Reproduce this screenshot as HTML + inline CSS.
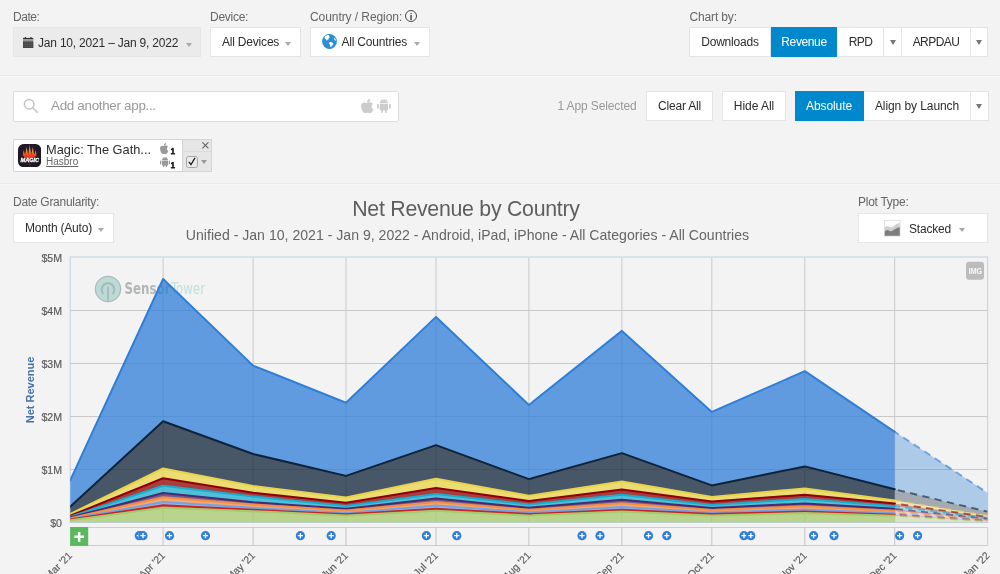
<!DOCTYPE html>
<html lang="en">
<head>
<meta charset="utf-8">
<title>Net Revenue by Country</title>
<style>
*{box-sizing:border-box;margin:0;padding:0}
html,body{width:1000px;height:574px;overflow:hidden;background:#f3f3f3}
#root{position:absolute;left:0;top:0;width:1000px;height:574px;will-change:transform}
body{font-family:"Liberation Sans",Arial,Helvetica,sans-serif;font-size:11.6px;color:#222;position:relative}
.abs{position:absolute}
.lbl{position:absolute;font-size:12px;letter-spacing:-.27px;color:#666;white-space:nowrap;line-height:14px}
.box{position:absolute;background:#fff;border:1px solid #e4e4e4;height:30px;line-height:28px;white-space:nowrap;font-size:12px;letter-spacing:-.2px;color:#2c2c2c}
.box.gray{background:#ebebeb;border-color:#e6e6e6}
.caret{display:inline-block;width:0;height:0;border-left:3.7px solid transparent;border-right:3.7px solid transparent;border-top:4px solid #aaa;vertical-align:middle}
.btn{position:absolute;top:0;height:30px;line-height:28px;text-align:center;background:#fff;border:1px solid #e4e4e4;border-left:none;font-size:12px;letter-spacing:-.2px;color:#2c2c2c;white-space:nowrap}
.btn.first{border-left:1px solid #e4e4e4}
.btn.on{background:#0088cc;border-color:#0088cc;color:#fff}
.tri{display:inline-block;width:0;height:0;border-left:3.6px solid transparent;border-right:3.6px solid transparent;border-top:5.6px solid #777;vertical-align:middle;position:relative;top:-.6px}
.sep{position:absolute;left:0;width:1000px;height:2px;border-top:1px solid #e9e9e9;border-bottom:1px solid #f9f9f9}
svg text.yl{font-size:10.6px;fill:#5c5c5c;stroke:#5c5c5c;stroke-width:.2px;font-family:"Liberation Sans",Arial,sans-serif}
svg text.xl{font-size:10.3px;fill:#5c5c5c;stroke:#5c5c5c;stroke-width:.15px;font-family:"Liberation Sans",Arial,sans-serif}
</style>
</head>
<body>
<div id="root">

<!-- ===== Row 1 : filters ===== -->
<div class="lbl" style="left:13px;top:10px;letter-spacing:-.45px">Date:</div>
<div class="box gray" style="left:13px;top:27.400px;width:188px">
  <svg class="abs" style="left:8.800px;top:8.800px" width="11" height="12" viewBox="0 0 11 12"><path d="M1.800 0h1.200v1.400H1.800zM7.400 0h1.200v1.400H7.400z" fill="#3a3a3a"/><path d="M0 .9h10.300v1.500H0z" fill="#333"/><path d="M0 2.400h10.300v1.900H0z" fill="#9a9a9a"/><path d="M0 4.300h10.300V11H0z" fill="#3d3d3d"/><path d="M0 6h10.300M0 7.700h10.300M0 9.400h10.300M2.100 4.800V11M4.150 4.800V11M6.200 4.800V11M8.250 4.800V11" stroke="#6a6a6a" stroke-width=".45"/></svg>
  <span class="abs" style="left:24px;top:1px">Jan 10, 2021 – Jan 9, 2022</span>
  <span class="caret abs" style="left:171.500px;top:14.500px"></span>
</div>

<div class="lbl" style="left:210px;top:10px">Device:</div>
<div class="box" style="left:210px;top:27.400px;width:91px">
  <span class="abs" style="left:11px;top:0">All Devices</span>
  <span class="caret abs" style="left:74px;top:14px"></span>
</div>

<div class="lbl" style="left:310px;top:10px;letter-spacing:-.07px">Country / Region:<span style="position:absolute;left:95px;top:.3px;width:12px;height:12px;border:1.100px solid #444;border-radius:50%;font-size:9.5px;line-height:11.800px;text-align:center;color:#333;font-weight:bold;letter-spacing:0">i</span></div>
<div class="box" style="left:310px;top:27.400px;width:120px">
  <svg class="abs" style="left:10.700px;top:6.100px" width="15" height="15" viewBox="0 0 15 15"><circle cx="7.500" cy="7.500" r="7.400" fill="#2a8fd6"/><path d="M3.300 2.300c.9-.9 2.300-1.500 3.500-1.300.5.300.3.800-.1 1 .6.100 1.200.500 1.100 1.100-.1.500-.7.500-1 .9-.3.400.2.900-.2 1.300-.4.300-.9 0-1.200.400-.2.300.1.700-.2.900-.5.200-.8-.4-1-.8-.3-.6-.9-.9-1.300-1.400-.5-.6-.2-1.500.4-2.100z" fill="#fff"/><path d="M7.600 8.200c.7-.3 1.600-.1 2.200.3.500.3 1.200.3 1.500.8.300.600-.2 1.200-.6 1.600-.500.500-.7 1.200-1.200 1.700-.3.300-.9.500-1.200.100-.3-.500 0-1.100-.2-1.600-.2-.6-.9-.9-1-1.500-.1-.600.100-1.200.500-1.400z" fill="#fff"/><path d="M12.300 3.700c.800.700 1.500 1.700 1.800 2.800-.4.300-.9.100-1.100-.3-.2-.500-.8-.6-1-1.100-.2-.500-.1-1.100.3-1.400z" fill="#fff"/></svg>
  <span class="abs" style="left:30.500px;top:0">All Countries</span>
  <span class="caret abs" style="left:102.500px;top:14px"></span>
</div>

<div class="lbl" style="left:689.500px;top:10px;letter-spacing:-.14px">Chart by:</div>
<div class="abs" style="left:689px;top:27.400px;height:30px;width:299px">
  <div class="btn first" style="left:0;width:82px">Downloads</div>
  <div class="btn on" style="left:82px;width:66px;letter-spacing:-.38px;padding-left:1px">Revenue</div>
  <div class="btn" style="left:148px;width:47px;letter-spacing:-.6px;padding-left:1px">RPD</div>
  <div class="btn" style="left:195px;width:18px"><span class="tri"></span></div>
  <div class="btn" style="left:213px;width:69px;letter-spacing:-.55px">ARPDAU</div>
  <div class="btn" style="left:282px;width:17px"><span class="tri"></span></div>
</div>

<div class="sep" style="top:75px"></div>

<!-- ===== Row 2 : app search ===== -->
<div class="abs" style="left:13px;top:91px;width:386px;height:30.500px;background:#fff;border:1px solid #ddd;border-radius:2px">
  <svg class="abs" style="left:9.300px;top:6.100px" width="16" height="16" viewBox="0 0 16 16"><circle cx="6.2" cy="6.2" r="4.800" fill="none" stroke="#c2c2c2" stroke-width="1.500"/><path d="M9.700 9.700L14.200 14.200" stroke="#c4c4c4" stroke-width="1.600" stroke-linecap="round"/></svg>
  <span class="abs" style="left:37px;top:0;line-height:28.500px;font-size:13.4px;letter-spacing:-.3px;color:#999">Add another app...</span>
  <svg class="abs" style="left:346.600px;top:6.800px" width="13.300" height="14.500" viewBox="0 0 12 14" preserveAspectRatio="none"><path d="M8.300 0c.1.900-.3 1.700-.8 2.300-.5.600-1.300 1-2.100.900-.1-.8.300-1.700.8-2.200C6.700.4 7.600 0 8.300 0zM10.900 4.800c-.9.600-1.400 1.400-1.400 2.500 0 1.200.7 2.200 1.800 2.600-.3.900-.7 1.700-1.300 2.500-.5.700-1.100 1.400-1.900 1.400-.8 0-1.100-.5-2.100-.5s-1.300.5-2.100.5c-.8 0-1.400-.7-2-1.500C.8 10.800 0 8.600 0 6.900c0-2.300 1.500-3.600 3-3.600.9 0 1.700.6 2.300.6.500 0 1.500-.7 2.600-.7 1.100 0 2.200.5 3 1.600z" fill="#ccc"/></svg>
  <svg class="abs" style="left:363.100px;top:7.200px" width="13.800" height="14" viewBox="0 0 14 15" preserveAspectRatio="none"><path d="M2.800 5h8.400v6.300c0 .4-.3.700-.7.700H9.800v2.100c0 .5-.4.900-.9.900s-.9-.4-.9-.9V12H6v2.100c0 .5-.4.900-.9.900s-.9-.4-.9-.9V12H3.500c-.4 0-.7-.3-.7-.7zM.9 5c.5 0 .9.400.9.900v3.700c0 .5-.4.900-.9.900S0 10.100 0 9.600V5.900C0 5.400.4 5 .9 5zM13.100 5c.5 0 .9.400.9.900v3.700c0 .5-.4.900-.9.900s-.9-.4-.9-.9V5.900c0-.5.400-.9.900-.9zM9.300 1.300l.7-1c.1-.1 0-.2-.1-.3-.1 0-.2 0-.200.100L9 1.100C8.400.9 7.700.8 7 .8s-1.400.1-2 .3L4.300.1C4.300 0 4.200 0 4.100 0 4 .1 3.900.2 4 .3l.7 1C3.600 1.900 2.900 3 2.800 4.300h8.400C11.100 3 10.400 1.900 9.300 1.300zM5.200 3.100c-.2 0-.4-.2-.4-.4s.2-.4.400-.4.400.2.400.4-.2.400-.4.400zm3.600 0c-.2 0-.4-.2-.4-.4s.2-.4.400-.4.400.2.400.4-.2.400-.4.400z" fill="#ccc"/></svg>
</div>

<div class="lbl" style="left:557.500px;top:99px;color:#999;letter-spacing:-.12px">1 App Selected</div>
<div class="abs" style="left:646px;top:91.400px;height:30px">
  <div class="btn first" style="left:0;width:67px">Clear All</div>
  <div class="btn first" style="left:76px;width:64px;letter-spacing:-.03px">Hide All</div>
  <div class="btn on" style="left:149px;width:69px;letter-spacing:-.09px">Absolute</div>
  <div class="btn" style="left:218px;width:107px;letter-spacing:-.08px">Align by Launch</div>
  <div class="btn" style="left:325px;width:17.500px"><span class="tri"></span></div>
</div>

<!-- app chip -->
<div class="abs" style="left:13px;top:139px;width:199px;height:33px;background:#fff;border:1px solid #d5d5d5;border-radius:2px">
  <svg class="abs" style="left:4px;top:3.800px" width="23.200" height="23.200" viewBox="0 0 23 23">
    <defs><linearGradient id="fl" x1="0" y1="0" x2="0" y2="1"><stop offset="0" stop-color="#d9892a"/><stop offset=".35" stop-color="#f0a030"/><stop offset=".7" stop-color="#f2401c"/><stop offset="1" stop-color="#e8301a"/></linearGradient>
    <radialGradient id="ib" cx=".5" cy=".45" r=".7"><stop offset="0" stop-color="#32243a"/><stop offset="1" stop-color="#17121b"/></radialGradient></defs>
    <rect width="23" height="23" rx="5.600" fill="url(#ib)"/>
    <path d="M11.600 .4V22.600" stroke="#9c2a18" stroke-width=".55"/>
    <path d="M4.800 11.200C5 9.500 5.500 7.500 5.700 6.200 6 7.600 6.600 9.400 7.100 10.400 7.700 8 8.300 5 8.500 2.700 8.800 5 9.500 8 10.050 10.400 10.700 7.500 11.300 4 11.600 .9 11.900 4 12.500 7.500 13.150 10.400 13.700 8 14.400 5 14.700 2.700 14.900 5 15.500 8 16.100 10.400 16.600 9.400 17.200 7.600 17.500 6.200 17.700 7.500 18.200 9.500 18.400 11.200 17.800 12.800 15.500 13.700 13.600 14.200L11.600 15.600 9.600 14.200C7.700 13.700 5.400 12.800 4.800 11.200z" fill="url(#fl)"/>
    <text x="11.700" y="17.700" text-anchor="middle" font-size="5.300" font-weight="bold" font-style="italic" fill="#fff" stroke="#fff" stroke-width=".25" font-family="Liberation Sans,sans-serif" textLength="18.500" lengthAdjust="spacingAndGlyphs">MAGIC</text>
  </svg>
  <span class="abs" style="left:32px;top:2px;font-size:12.8px;line-height:16px;color:#2c2c2c;white-space:nowrap">Magic: The Gath...</span>
  <span class="abs" style="left:32px;top:15.400px;font-size:10px;line-height:13px;color:#666;text-decoration:underline">Hasbro</span>
  <svg class="abs" style="left:146.300px;top:2.600px" width="8.800" height="11.200" viewBox="0 0 12 14" preserveAspectRatio="none"><path d="M8.300 0c.1.900-.3 1.700-.8 2.300-.5.600-1.300 1-2.100.900-.1-.8.300-1.700.8-2.200C6.700.4 7.600 0 8.300 0zM10.900 4.800c-.9.600-1.400 1.400-1.400 2.500 0 1.200.7 2.200 1.800 2.600-.3.900-.7 1.700-1.300 2.500-.5.700-1.100 1.400-1.900 1.400-.8 0-1.100-.5-2.100-.5s-1.300.5-2.100.5c-.8 0-1.400-.7-2-1.500C.8 10.800 0 8.600 0 6.900c0-2.300 1.500-3.600 3-3.600.9 0 1.700.6 2.300.6.500 0 1.500-.7 2.600-.7 1.100 0 2.200.5 3 1.600z" fill="#999"/></svg>
  <svg class="abs" style="left:155px;top:4.600px" width="10" height="11"><text x="1.600" y="9.100" font-size="8.400" fill="#222" stroke="#222" stroke-width=".75" stroke-linejoin="round" font-family="Liberation Sans,sans-serif" text-rendering="geometricPrecision">1</text></svg>
  <svg class="abs" style="left:145.600px;top:16.700px" width="10" height="10.600" viewBox="0 0 14 15" preserveAspectRatio="none"><path d="M2.800 5h8.400v6.300c0 .4-.3.700-.7.700H9.800v2.100c0 .5-.4.900-.9.900s-.9-.4-.9-.9V12H6v2.100c0 .5-.4.900-.9.900s-.9-.4-.9-.9V12H3.500c-.4 0-.7-.3-.7-.7zM.9 5c.5 0 .9.400.9.900v3.700c0 .5-.4.900-.9.900S0 10.100 0 9.600V5.900C0 5.400.4 5 .9 5zM13.100 5c.5 0 .9.400.9.900v3.700c0 .5-.4.900-.9.900s-.9-.4-.9-.9V5.900c0-.5.400-.9.900-.9zM9.300 1.300l.7-1c.1-.1 0-.2-.1-.3-.1 0-.2 0-.200.100L9 1.100C8.400.9 7.700.8 7 .8s-1.400.1-2 .3L4.300.1C4.300 0 4.200 0 4.100 0 4 .1 3.900.2 4 .3l.7 1C3.600 1.900 2.900 3 2.800 4.300h8.400C11.100 3 10.400 1.900 9.300 1.300z" fill="#999"/></svg>
  <svg class="abs" style="left:155px;top:18.600px" width="10" height="11"><text x="1.600" y="9.100" font-size="8.400" fill="#222" stroke="#222" stroke-width=".75" stroke-linejoin="round" font-family="Liberation Sans,sans-serif" text-rendering="geometricPrecision">1</text></svg>
  <div class="abs" style="left:168px;top:-1px;width:30px;height:33px;background:#e6e6e6;border:1px solid #d5d5d5">
    <div class="abs" style="left:0;top:0;width:28px;height:12px;border-bottom:1px solid #dcdcdc"></div>
    <svg class="abs" style="left:18.600px;top:2.300px" width="7" height="7" viewBox="0 0 7 7"><path d="M.4.400l6 6M6.400.400l-6 6" stroke="#666" stroke-width="1.150"/></svg>
    <div class="abs" style="left:3px;top:16px;width:11.500px;height:11.500px;background:#ebebeb;border:1px solid #a5a5a5;border-radius:2.500px"></div>
    <svg class="abs" style="left:5px;top:17px" width="8" height="9" viewBox="0 0 8 9"><path d="M.8 4.800L3 7.500 7 .8" fill="none" stroke="#222" stroke-width="1.300"/></svg>
    <span class="caret abs" style="left:18px;top:20px;border-left-width:3.500px;border-right-width:3.500px;border-top-color:#999"></span>
  </div>
</div>

<div class="sep" style="top:183px"></div>

<!-- ===== Chart header ===== -->
<div class="lbl" style="left:13px;top:195px">Date Granularity:</div>
<div class="box" style="left:13px;top:213px;width:101px">
  <span class="abs" style="left:11px;top:0">Month (Auto)</span>
  <span class="caret abs" style="left:84px;top:14px"></span>
</div>

<div class="abs" style="left:0;top:196px;width:932px;text-align:center;font-size:21.3px;letter-spacing:-.26px;line-height:26px;color:#5e5e5e;white-space:nowrap">Net Revenue by Country</div>
<div class="abs" style="left:1.500px;top:226px;width:932px;text-align:center;font-size:14.1px;line-height:18px;color:#666;white-space:nowrap">Unified - Jan 10, 2021 - Jan 9, 2022 - Android, iPad, iPhone - All Categories - All Countries</div>

<div class="lbl" style="left:858px;top:195px">Plot Type:</div>
<div class="box" style="left:858px;top:213px;width:130px">
  <svg class="abs" style="left:25.200px;top:6px" width="16.500" height="16.500" viewBox="0 0 16.500 16.500"><rect x=".4" y=".4" width="15.700" height="15.700" fill="#fdfdfd" stroke="#dcdcdc" stroke-width=".8"/><path d="M.8 7.200c1.500-1.200 3-1.400 4.500-.4 1.500.9 2.800.6 4-.4 1.700-1.500 3.800-2.600 6.400-3.300V15.700H.8z" fill="#cfcfcf"/><path d="M.8 11.300c1.500-1.300 3-1.600 4.500-.6 1.500.9 2.800.5 4-.4 1.700-1.300 3.800-2.600 6.400-3.300V15.700H.8z" fill="#7d7d7d"/></svg>
  <span class="abs" style="left:50px;top:1px">Stacked</span>
  <span class="caret abs" style="left:100px;top:14px"></span>
</div>

<!-- ===== Chart ===== -->
<svg class="abs" style="left:0;top:0" width="1000" height="574" viewBox="0 0 1000 574">
  <!-- plot border -->
  <rect x="70.200" y="257" width="917.500" height="265.500" fill="none" stroke="#c0d0e0" stroke-width="1"/>
  <line x1="70.2" x2="987.7" y1="310.5" y2="310.5" stroke="#c9c9c9" stroke-width="1"/>
<line x1="70.2" x2="987.7" y1="363.5" y2="363.5" stroke="#c9c9c9" stroke-width="1"/>
<line x1="70.2" x2="987.7" y1="416.5" y2="416.5" stroke="#c9c9c9" stroke-width="1"/>
<line x1="70.2" x2="987.7" y1="469.5" y2="469.5" stroke="#c9c9c9" stroke-width="1"/>
<line x1="163.1" x2="163.1" y1="257.5" y2="522.5" stroke="#c9c9c9" stroke-width="1"/>
<line x1="253.1" x2="253.1" y1="257.5" y2="522.5" stroke="#c9c9c9" stroke-width="1"/>
<line x1="346.0" x2="346.0" y1="257.5" y2="522.5" stroke="#c9c9c9" stroke-width="1"/>
<line x1="436.0" x2="436.0" y1="257.5" y2="522.5" stroke="#c9c9c9" stroke-width="1"/>
<line x1="528.9" x2="528.9" y1="257.5" y2="522.5" stroke="#c9c9c9" stroke-width="1"/>
<line x1="621.9" x2="621.9" y1="257.5" y2="522.5" stroke="#c9c9c9" stroke-width="1"/>
<line x1="711.8" x2="711.8" y1="257.5" y2="522.5" stroke="#c9c9c9" stroke-width="1"/>
<line x1="804.8" x2="804.8" y1="257.5" y2="522.5" stroke="#c9c9c9" stroke-width="1"/>
<line x1="894.7" x2="894.7" y1="257.5" y2="522.5" stroke="#c9c9c9" stroke-width="1"/>
  <!-- watermark -->
  <g>
    <circle cx="108" cy="289" r="12.600" fill="#b9dcd8" stroke="#b3b9b9" stroke-width="1.300"/>
    <path d="M103.400 293.800a6.300 6.300 0 1 1 9.200 0" fill="none" stroke="#aab4b3" stroke-width="1.800"/>
    <path d="M108 286.800V300.800" stroke="#aab4b3" stroke-width="1.600"/>
    <text x="124.500" y="294.300" font-size="15.2" font-weight="bold" fill="#b2b6b6" font-family="DejaVu Sans Condensed,Liberation Sans,sans-serif" textLength="46" lengthAdjust="spacingAndGlyphs">Sensor</text>
    <text x="171" y="294.300" font-size="15.2" fill="#bfe0dc" font-family="DejaVu Sans Condensed,Liberation Sans,sans-serif" textLength="34" lengthAdjust="spacingAndGlyphs">Tower</text>
  </g>
  <!-- series -->
  <g>
  <clipPath id="pz"><rect x="894.7" y="257" width="93" height="265.5"/></clipPath><clipPath id="pc"><rect x="70.2" y="257" width="917.5" height="265.5"/></clipPath><g clip-path="url(#pc)"><polygon points="70.2,480.4 163.1,279.0 253.1,365.6 346.0,402.7 436.0,316.9 528.9,405.0 621.9,330.9 711.8,411.9 804.8,371.2 894.7,431.8 894.7,489.3 804.8,466.4 711.8,485.4 621.9,453.1 528.9,479.1 436.0,445.1 346.0,475.9 253.1,454.0 163.1,421.2 70.2,506.7" fill="#2f7ed8" fill-opacity="0.75"/>
<polygon points="894.7,431.8 987.7,493.0 987.7,511.7 894.7,489.3" fill="#2f7ed8" fill-opacity="0.35"/>
<polyline points="70.2,480.4 163.1,279.0 253.1,365.6 346.0,402.7 436.0,316.9 528.9,405.0 621.9,330.9 711.8,411.9 804.8,371.2 894.7,431.8" fill="none" stroke="#2f7ed8" stroke-width="2" stroke-linejoin="round" stroke-linecap="round"/>
<polyline clip-path="url(#pz)" points="70.2,480.4 163.1,279.0 253.1,365.6 346.0,402.7 436.0,316.9 528.9,405.0 621.9,330.9 711.8,411.9 804.8,371.2 894.7,431.8 987.7,493.0" fill="none" stroke="#2f7ed8" stroke-width="1.9" stroke-dasharray="7.2,5.4" stroke-opacity="0.62"/>
<polygon points="70.2,506.7 163.1,421.2 253.1,454.0 346.0,475.9 436.0,445.1 528.9,479.1 621.9,453.1 711.8,485.4 804.8,466.4 894.7,489.3 894.7,500.4 804.8,488.4 711.8,496.9 621.9,481.4 528.9,495.8 436.0,478.7 346.0,497.6 253.1,486.0 163.1,468.5 70.2,514.0" fill="#0d233a" fill-opacity="0.75"/>
<polygon points="894.7,489.3 987.7,511.7 987.7,515.8 894.7,500.4" fill="#0d233a" fill-opacity="0.35"/>
<polyline points="70.2,506.7 163.1,421.2 253.1,454.0 346.0,475.9 436.0,445.1 528.9,479.1 621.9,453.1 711.8,485.4 804.8,466.4 894.7,489.3" fill="none" stroke="#0d233a" stroke-width="2" stroke-linejoin="round" stroke-linecap="round"/>
<polyline clip-path="url(#pz)" points="70.2,506.7 163.1,421.2 253.1,454.0 346.0,475.9 436.0,445.1 528.9,479.1 621.9,453.1 711.8,485.4 804.8,466.4 894.7,489.3 987.7,511.7" fill="none" stroke="#0d233a" stroke-width="1.9" stroke-dasharray="7.2,5.4" stroke-opacity="0.62"/>
<polygon points="70.2,514.0 163.1,468.5 253.1,486.0 346.0,497.6 436.0,478.7 528.9,495.8 621.9,481.4 711.8,496.9 804.8,488.4 894.7,500.4 894.7,503.5 804.8,494.8 711.8,501.4 621.9,489.5 528.9,501.0 436.0,488.1 346.0,502.8 253.1,492.7 163.1,478.3 70.2,515.7" fill="#e8d44a" fill-opacity="0.75"/>
<polygon points="894.7,500.4 987.7,515.8 987.7,517.0 894.7,503.5" fill="#e8d44a" fill-opacity="0.35"/>
<polyline points="70.2,514.0 163.1,468.5 253.1,486.0 346.0,497.6 436.0,478.7 528.9,495.8 621.9,481.4 711.8,496.9 804.8,488.4 894.7,500.4" fill="none" stroke="#e8d44a" stroke-width="2" stroke-linejoin="round" stroke-linecap="round"/>
<polyline clip-path="url(#pz)" points="70.2,514.0 163.1,468.5 253.1,486.0 346.0,497.6 436.0,478.7 528.9,495.8 621.9,481.4 711.8,496.9 804.8,488.4 894.7,500.4 987.7,515.8" fill="none" stroke="#e8d44a" stroke-width="1.9" stroke-dasharray="7.2,5.4" stroke-opacity="0.62"/>
<polygon points="70.2,515.7 163.1,478.3 253.1,492.7 346.0,502.8 436.0,488.1 528.9,501.0 621.9,489.5 711.8,501.4 804.8,494.8 894.7,503.5 894.7,506.3 804.8,498.9 711.8,504.9 621.9,494.8 528.9,504.5 436.0,494.0 346.0,505.9 253.1,496.5 163.1,485.7 70.2,516.8" fill="#910000" fill-opacity="0.75"/>
<polygon points="894.7,503.5 987.7,517.0 987.7,518.2 894.7,506.3" fill="#910000" fill-opacity="0.35"/>
<polyline points="70.2,515.7 163.1,478.3 253.1,492.7 346.0,502.8 436.0,488.1 528.9,501.0 621.9,489.5 711.8,501.4 804.8,494.8 894.7,503.5" fill="none" stroke="#910000" stroke-width="2" stroke-linejoin="round" stroke-linecap="round"/>
<polyline clip-path="url(#pz)" points="70.2,515.7 163.1,478.3 253.1,492.7 346.0,502.8 436.0,488.1 528.9,501.0 621.9,489.5 711.8,501.4 804.8,494.8 894.7,503.5 987.7,517.0" fill="none" stroke="#910000" stroke-width="1.9" stroke-dasharray="7.2,5.4" stroke-opacity="0.62"/>
<polygon points="70.2,516.8 163.1,485.7 253.1,496.5 346.0,505.9 436.0,494.0 528.9,504.5 621.9,494.8 711.8,504.9 804.8,498.9 894.7,506.3 894.7,508.8 804.8,503.5 711.8,508.0 621.9,499.7 528.9,507.7 436.0,498.6 346.0,508.8 253.1,502.2 163.1,493.0 70.2,517.5" fill="#1aadce" fill-opacity="0.75"/>
<polygon points="894.7,506.3 987.7,518.2 987.7,519.0 894.7,508.8" fill="#1aadce" fill-opacity="0.35"/>
<polyline points="70.2,516.8 163.1,485.7 253.1,496.5 346.0,505.9 436.0,494.0 528.9,504.5 621.9,494.8 711.8,504.9 804.8,498.9 894.7,506.3" fill="none" stroke="#1aadce" stroke-width="2" stroke-linejoin="round" stroke-linecap="round"/>
<polyline clip-path="url(#pz)" points="70.2,516.8 163.1,485.7 253.1,496.5 346.0,505.9 436.0,494.0 528.9,504.5 621.9,494.8 711.8,504.9 804.8,498.9 894.7,506.3 987.7,518.2" fill="none" stroke="#1aadce" stroke-width="1.9" stroke-dasharray="7.2,5.4" stroke-opacity="0.62"/>
<polygon points="70.2,517.5 163.1,493.0 253.1,502.2 346.0,508.8 436.0,498.6 528.9,507.7 621.9,499.7 711.8,508.0 804.8,503.5 894.7,508.8 894.7,510.8 804.8,506.3 711.8,510.1 621.9,503.2 528.9,509.8 436.0,502.1 346.0,510.5 253.1,504.5 163.1,497.2 70.2,518.2" fill="#492970" fill-opacity="0.75"/>
<polygon points="894.7,508.8 987.7,519.0 987.7,519.8 894.7,510.8" fill="#492970" fill-opacity="0.35"/>
<polyline points="70.2,517.5 163.1,493.0 253.1,502.2 346.0,508.8 436.0,498.6 528.9,507.7 621.9,499.7 711.8,508.0 804.8,503.5 894.7,508.8" fill="none" stroke="#492970" stroke-width="2" stroke-linejoin="round" stroke-linecap="round"/>
<polyline clip-path="url(#pz)" points="70.2,517.5 163.1,493.0 253.1,502.2 346.0,508.8 436.0,498.6 528.9,507.7 621.9,499.7 711.8,508.0 804.8,503.5 894.7,508.8 987.7,519.0" fill="none" stroke="#492970" stroke-width="1.9" stroke-dasharray="7.2,5.4" stroke-opacity="0.62"/>
<polygon points="70.2,518.2 163.1,497.2 253.1,504.5 346.0,510.5 436.0,502.1 528.9,509.8 621.9,503.2 711.8,510.1 804.8,506.3 894.7,510.8 894.7,513.3 804.8,509.5 711.8,512.6 621.9,507.0 528.9,512.3 436.0,505.6 346.0,512.9 253.1,507.7 163.1,502.1 70.2,519.0" fill="#f28f43" fill-opacity="0.75"/>
<polygon points="894.7,510.8 987.7,519.8 987.7,520.2 894.7,513.3" fill="#f28f43" fill-opacity="0.35"/>
<polyline points="70.2,518.2 163.1,497.2 253.1,504.5 346.0,510.5 436.0,502.1 528.9,509.8 621.9,503.2 711.8,510.1 804.8,506.3 894.7,510.8" fill="none" stroke="#f28f43" stroke-width="2" stroke-linejoin="round" stroke-linecap="round"/>
<polyline clip-path="url(#pz)" points="70.2,518.2 163.1,497.2 253.1,504.5 346.0,510.5 436.0,502.1 528.9,509.8 621.9,503.2 711.8,510.1 804.8,506.3 894.7,510.8 987.7,519.8" fill="none" stroke="#f28f43" stroke-width="1.9" stroke-dasharray="7.2,5.4" stroke-opacity="0.62"/>
<polygon points="70.2,519.0 163.1,502.1 253.1,507.7 346.0,512.9 436.0,505.6 528.9,512.3 621.9,507.0 711.8,512.6 804.8,509.5 894.7,513.3 894.7,514.7 804.8,511.5 711.8,514.0 621.9,509.8 528.9,514.1 436.0,508.8 346.0,514.3 253.1,509.8 163.1,505.3 70.2,519.6" fill="#77a1e5" fill-opacity="0.75"/>
<polygon points="894.7,513.3 987.7,520.2 987.7,520.7 894.7,514.7" fill="#77a1e5" fill-opacity="0.35"/>
<polyline points="70.2,519.0 163.1,502.1 253.1,507.7 346.0,512.9 436.0,505.6 528.9,512.3 621.9,507.0 711.8,512.6 804.8,509.5 894.7,513.3" fill="none" stroke="#77a1e5" stroke-width="2" stroke-linejoin="round" stroke-linecap="round"/>
<polyline clip-path="url(#pz)" points="70.2,519.0 163.1,502.1 253.1,507.7 346.0,512.9 436.0,505.6 528.9,512.3 621.9,507.0 711.8,512.6 804.8,509.5 894.7,513.3 987.7,520.2" fill="none" stroke="#77a1e5" stroke-width="1.9" stroke-dasharray="7.2,5.4" stroke-opacity="0.62"/>
<polygon points="70.2,519.6 163.1,505.3 253.1,509.8 346.0,514.3 436.0,508.8 528.9,514.1 621.9,509.8 711.8,514.0 804.8,511.5 894.7,514.7 894.7,515.8 804.8,512.9 711.8,515.4 621.9,511.5 528.9,515.4 436.0,510.8 346.0,515.4 253.1,511.2 163.1,507.7 70.2,520.3" fill="#c42525" fill-opacity="0.75"/>
<polygon points="894.7,514.7 987.7,520.7 987.7,521.2 894.7,515.8" fill="#c42525" fill-opacity="0.35"/>
<polyline points="70.2,519.6 163.1,505.3 253.1,509.8 346.0,514.3 436.0,508.8 528.9,514.1 621.9,509.8 711.8,514.0 804.8,511.5 894.7,514.7" fill="none" stroke="#c42525" stroke-width="2" stroke-linejoin="round" stroke-linecap="round"/>
<polyline clip-path="url(#pz)" points="70.2,519.6 163.1,505.3 253.1,509.8 346.0,514.3 436.0,508.8 528.9,514.1 621.9,509.8 711.8,514.0 804.8,511.5 894.7,514.7 987.7,520.7" fill="none" stroke="#c42525" stroke-width="1.9" stroke-dasharray="7.2,5.4" stroke-opacity="0.62"/>
<polygon points="70.2,520.3 163.1,507.7 253.1,511.2 346.0,515.4 436.0,510.8 528.9,515.4 621.9,511.5 711.8,515.4 804.8,512.9 894.7,515.8 894.7,522.5 804.8,522.5 711.8,522.5 621.9,522.5 528.9,522.5 436.0,522.5 346.0,522.5 253.1,522.5 163.1,522.5 70.2,522.5" fill="#a6c96a" fill-opacity="0.75"/>
<polygon points="894.7,515.8 987.7,521.2 987.7,522.5 894.7,522.5" fill="#a6c96a" fill-opacity="0.35"/>
<polyline points="70.2,520.3 163.1,507.7 253.1,511.2 346.0,515.4 436.0,510.8 528.9,515.4 621.9,511.5 711.8,515.4 804.8,512.9 894.7,515.8" fill="none" stroke="#a6c96a" stroke-width="2" stroke-linejoin="round" stroke-linecap="round"/>
<polyline clip-path="url(#pz)" points="70.2,520.3 163.1,507.7 253.1,511.2 346.0,515.4 436.0,510.8 528.9,515.4 621.9,511.5 711.8,515.4 804.8,512.9 894.7,515.8 987.7,521.2" fill="none" stroke="#a6c96a" stroke-width="1.9" stroke-dasharray="7.2,5.4" stroke-opacity="0.62"/></g>
  </g>
  <!-- IMG button -->
  <rect x="966" y="261.700" width="18" height="18" rx="3.2" fill="#bcbcbc"/>
  <text x="968.7" y="273.500" font-size="8.3" textLength="13.4" lengthAdjust="spacingAndGlyphs" font-weight="bold" fill="#fafafa" font-family="Liberation Sans,sans-serif">IMG</text>
  <!-- y axis -->
  <text x="62" y="262.0" text-anchor="end" class="yl">$5M</text><text x="62" y="315.0" text-anchor="end" class="yl">$4M</text><text x="62" y="368.0" text-anchor="end" class="yl">$3M</text><text x="62" y="421.0" text-anchor="end" class="yl">$2M</text><text x="62" y="474.0" text-anchor="end" class="yl">$1M</text><text x="62" y="527.0" text-anchor="end" class="yl">$0</text>
  <text transform="translate(33.500,390) rotate(-90)" text-anchor="middle" font-size="11" font-weight="bold" fill="#4572a7" font-family="Liberation Sans,sans-serif">Net Revenue</text>
  <!-- event row -->
  <path d="M70.200 527.500H987.700M70.200 545.500H987.700M987.700 527.500V545.500" stroke="#c0d0e0" stroke-width="1" fill="none"/>
  <rect x="70.100" y="527" width="18.100" height="18.900" fill="#5cb85c"/>
  <path d="M74.300 536.800H84M79.150 532V541.700" stroke="#fff" stroke-width="2.500"/>
  <line x1="163.1" x2="163.1" y1="527.5" y2="545.5" stroke="#c4c4c4" stroke-width="1"/><line x1="253.1" x2="253.1" y1="527.5" y2="545.5" stroke="#c4c4c4" stroke-width="1"/><line x1="346.0" x2="346.0" y1="527.5" y2="545.5" stroke="#c4c4c4" stroke-width="1"/><line x1="436.0" x2="436.0" y1="527.5" y2="545.5" stroke="#c4c4c4" stroke-width="1"/><line x1="528.9" x2="528.9" y1="527.5" y2="545.5" stroke="#c4c4c4" stroke-width="1"/><line x1="621.9" x2="621.9" y1="527.5" y2="545.5" stroke="#c4c4c4" stroke-width="1"/><line x1="711.8" x2="711.8" y1="527.5" y2="545.5" stroke="#c4c4c4" stroke-width="1"/><line x1="804.8" x2="804.8" y1="527.5" y2="545.5" stroke="#c4c4c4" stroke-width="1"/><line x1="894.7" x2="894.7" y1="527.5" y2="545.5" stroke="#c4c4c4" stroke-width="1"/><g transform="translate(139.3,535.7)"><circle r="4.6" fill="#2f7ed8"/><path d="M-2.6 0H2.6M0 -2.6V2.6" stroke="#fff" stroke-width="1.3"/></g><g transform="translate(143.0,535.7)"><circle r="4.6" fill="#2f7ed8"/><path d="M-2.6 0H2.6M0 -2.6V2.6" stroke="#fff" stroke-width="1.3"/></g><g transform="translate(169.5,535.7)"><circle r="4.6" fill="#2f7ed8"/><path d="M-2.6 0H2.6M0 -2.6V2.6" stroke="#fff" stroke-width="1.3"/></g><g transform="translate(205.5,535.7)"><circle r="4.6" fill="#2f7ed8"/><path d="M-2.6 0H2.6M0 -2.6V2.6" stroke="#fff" stroke-width="1.3"/></g><g transform="translate(300.4,535.7)"><circle r="4.6" fill="#2f7ed8"/><path d="M-2.6 0H2.6M0 -2.6V2.6" stroke="#fff" stroke-width="1.3"/></g><g transform="translate(331.2,535.7)"><circle r="4.6" fill="#2f7ed8"/><path d="M-2.6 0H2.6M0 -2.6V2.6" stroke="#fff" stroke-width="1.3"/></g><g transform="translate(426.4,535.7)"><circle r="4.6" fill="#2f7ed8"/><path d="M-2.6 0H2.6M0 -2.6V2.6" stroke="#fff" stroke-width="1.3"/></g><g transform="translate(456.8,535.7)"><circle r="4.6" fill="#2f7ed8"/><path d="M-2.6 0H2.6M0 -2.6V2.6" stroke="#fff" stroke-width="1.3"/></g><g transform="translate(582.0,535.7)"><circle r="4.6" fill="#2f7ed8"/><path d="M-2.6 0H2.6M0 -2.6V2.6" stroke="#fff" stroke-width="1.3"/></g><g transform="translate(600.0,535.7)"><circle r="4.6" fill="#2f7ed8"/><path d="M-2.6 0H2.6M0 -2.6V2.6" stroke="#fff" stroke-width="1.3"/></g><g transform="translate(648.5,535.7)"><circle r="4.6" fill="#2f7ed8"/><path d="M-2.6 0H2.6M0 -2.6V2.6" stroke="#fff" stroke-width="1.3"/></g><g transform="translate(666.8,535.7)"><circle r="4.6" fill="#2f7ed8"/><path d="M-2.6 0H2.6M0 -2.6V2.6" stroke="#fff" stroke-width="1.3"/></g><g transform="translate(744.0,535.7)"><circle r="4.6" fill="#2f7ed8"/><path d="M-2.6 0H2.6M0 -2.6V2.6" stroke="#fff" stroke-width="1.3"/></g><g transform="translate(750.8,535.7)"><circle r="4.6" fill="#2f7ed8"/><path d="M-2.6 0H2.6M0 -2.6V2.6" stroke="#fff" stroke-width="1.3"/></g><g transform="translate(813.6,535.7)"><circle r="4.6" fill="#2f7ed8"/><path d="M-2.6 0H2.6M0 -2.6V2.6" stroke="#fff" stroke-width="1.3"/></g><g transform="translate(834.0,535.7)"><circle r="4.6" fill="#2f7ed8"/><path d="M-2.6 0H2.6M0 -2.6V2.6" stroke="#fff" stroke-width="1.3"/></g><g transform="translate(899.6,535.7)"><circle r="4.6" fill="#2f7ed8"/><path d="M-2.6 0H2.6M0 -2.6V2.6" stroke="#fff" stroke-width="1.3"/></g><g transform="translate(917.6,535.7)"><circle r="4.6" fill="#2f7ed8"/><path d="M-2.6 0H2.6M0 -2.6V2.6" stroke="#fff" stroke-width="1.3"/></g>
  <!-- x axis -->
  <text transform="translate(72.9,556.1) rotate(-45)" text-anchor="end" class="xl">Mar '21</text><text transform="translate(165.8,556.1) rotate(-45)" text-anchor="end" class="xl">Apr '21</text><text transform="translate(255.8,556.1) rotate(-45)" text-anchor="end" class="xl">May '21</text><text transform="translate(348.7,556.1) rotate(-45)" text-anchor="end" class="xl">Jun '21</text><text transform="translate(438.7,556.1) rotate(-45)" text-anchor="end" class="xl">Jul '21</text><text transform="translate(531.6,556.1) rotate(-45)" text-anchor="end" class="xl">Aug '21</text><text transform="translate(624.6,556.1) rotate(-45)" text-anchor="end" class="xl">Sep '21</text><text transform="translate(714.5,556.1) rotate(-45)" text-anchor="end" class="xl">Oct '21</text><text transform="translate(807.5,556.1) rotate(-45)" text-anchor="end" class="xl">Nov '21</text><text transform="translate(897.4,556.1) rotate(-45)" text-anchor="end" class="xl">Dec '21</text><text transform="translate(990.4,556.1) rotate(-45)" text-anchor="end" class="xl">Jan '22</text>
</svg>

</div>
</body>
</html>
